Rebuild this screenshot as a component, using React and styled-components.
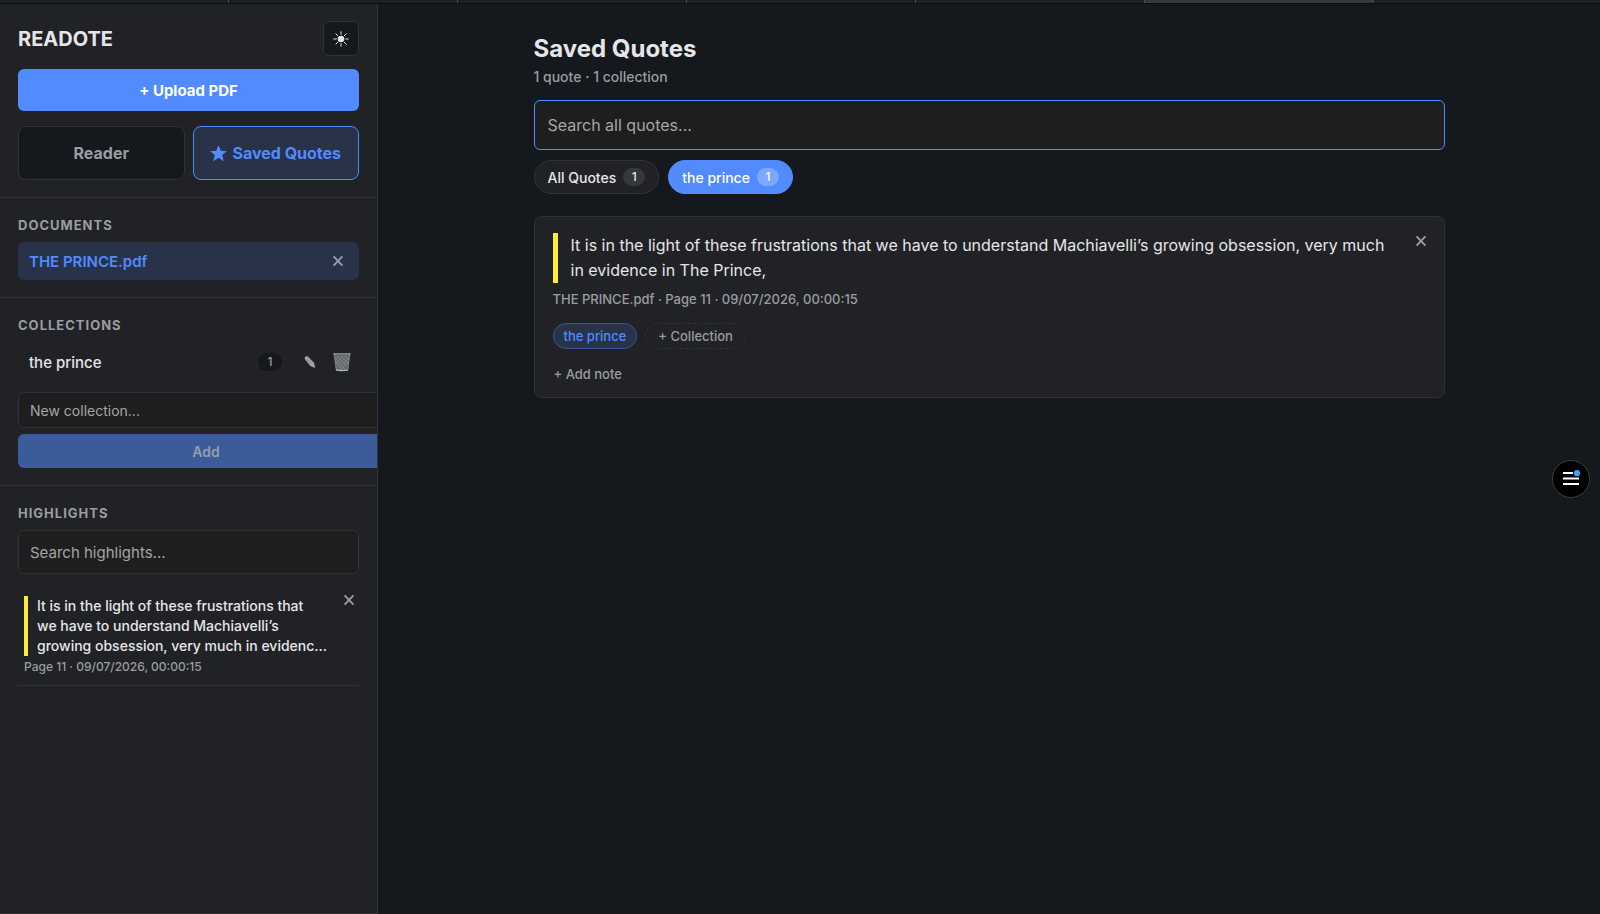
import React, { useState } from "react";
import styled, { createGlobalStyle, css } from "styled-components";

const color = {
  bg: "#15181d",
  panel: "#212226",
  border: "#2f3237",
  text: "#e6e6e9",
  muted: "#9a9da3",
  accent: "#528bff",
  accentSoft: "#283248",
  field: "#1e1e1e",
  mark: "#ffeb3b",
};

const QUOTE =
  "It is in the light of these frustrations that we\u00a0have to understand Machiavelli’s growing obsession, very much in evidence in The Prince,";

const PREVIEW_LENGTH = 121;

const preview = (text) =>
  text.length > PREVIEW_LENGTH ? `${text.slice(0, PREVIEW_LENGTH)}...` : text;

const browserTabs = [1, 2, 3, 4, 5, 6, 7];

const SunIcon = () => (
  <svg width="16" height="16" viewBox="0 0 16 16" aria-hidden="true">
    <circle cx="8" cy="8" r="3.3" fill="currentColor" />
    <path
      d="M8 .7v2.6M8 12.7v2.6M.7 8h2.6M12.7 8h2.6M2.9 2.9l1.8 1.8M11.3 11.3l1.8 1.8M13.1 2.9l-1.8 1.8M4.7 11.3l-1.8 1.8"
      stroke="currentColor"
      strokeWidth="1"
      strokeLinecap="round"
    />
  </svg>
);

const StarIcon = () => (
  <svg width="17" height="17" viewBox="0 0 16 16" aria-hidden="true">
    <path
      d="M8 .2l2.2 5.3 5.6.3-4.3 3.7 1.5 5.7L8 12.1l-5 3.1 1.5-5.7L.2 5.8l5.6-.3z"
      fill="currentColor"
    />
  </svg>
);

const CloseIcon = () => (
  <svg width="12" height="12" viewBox="0 0 12 12" aria-hidden="true">
    <path
      d="M1.6 1.4l8.8 9.2M10.4 1.4l-8.8 9.2"
      stroke="currentColor"
      strokeWidth="1.9"
    />
  </svg>
);

const PencilIcon = () => (
  <svg width="14" height="14" viewBox="0 0 14 14" aria-hidden="true">
    <path
      d="M1.8 4C1 2 3 .5 4.9 1.6l6.1 6.2 1.2 5.2-4.9-1.9z"
      fill="#a3a4a6"
    />
    <path d="M4 4.2l4.4 4.8" stroke="#77787b" strokeWidth=".6" />
  </svg>
);

const TrashIcon = () => (
  <svg width="20" height="20" viewBox="0 0 20 20" aria-hidden="true">
    <path d="M2 2h16l-2 16.2q-6 1.2-12 0z" fill="#5c6265" />
    <path
      d="M3 5l10.5 13M5.5 4l10.5 12M9.5 4l7 8.5M13.5 4l3.5 4.5M3.4 9l7.5 9.5M17 5L6.5 18M14.5 4L4 16M10.5 4l-7 8.5M6.5 4L3 8.5M16.6 9L9 18.5"
      stroke="#969b9e"
      strokeWidth=".6"
    />
    <path d="M2.3 3l2 15M17.7 3l-2 15" stroke="#858a8d" strokeWidth=".8" />
    <path d="M4 17.9q6 1.4 12 0" stroke="#b6babc" strokeWidth="1.2" fill="none" />
    <rect x="1.2" y="1" width="17.6" height="2.2" rx="1.1" fill="#8e9395" />
    <path d="M3 2.2h14" stroke="#4b5053" strokeWidth=".7" />
  </svg>
);

const MenuIcon = () => (
  <svg width="20" height="18" viewBox="0 0 20 18" aria-hidden="true">
    <path d="M2 3h10M2 8.5h16M2 14h16" stroke="#fff" strokeWidth="2.2" />
    <circle cx="16" cy="3.2" r="3.1" fill="#4a9dff" />
  </svg>
);

const App = () => {
  const [view, setView] = useState("quotes");
  const [filter, setFilter] = useState("prince");

  return (
    <Screen>
      <GlobalStyle />
      <TabStrip>
        {browserTabs.map((tab) => (
          <StripTab key={tab} $active={tab === 6} />
        ))}
      </TabStrip>
      <Layout>
        <Sidebar>
          <SidebarTop>
            <Brand>
              <BrandName>READOTE</BrandName>
              <ThemeButton aria-label="Toggle theme">
                <SunIcon />
              </ThemeButton>
            </Brand>
            <UploadButton>+ Upload PDF</UploadButton>
            <ViewTabs>
              <ViewTab $active={view === "reader"} onClick={() => setView("reader")}>
                Reader
              </ViewTab>
              <ViewTab $active={view === "quotes"} onClick={() => setView("quotes")}>
                <StarIcon />
                Saved Quotes
              </ViewTab>
            </ViewTabs>
          </SidebarTop>

          <Section>
            <SectionTitle>Documents</SectionTitle>
            <DocumentRow>
              <DocumentName>THE PRINCE.pdf</DocumentName>
              <IconButton aria-label="Remove document">
                <CloseIcon />
              </IconButton>
            </DocumentRow>
          </Section>

          <Section>
            <SectionTitle>Collections</SectionTitle>
            <CollectionRow>
              <CollectionName>the prince</CollectionName>
              <CollectionCount>1</CollectionCount>
              <CollectionActions>
                <IconButton aria-label="Rename collection">
                  <PencilIcon />
                </IconButton>
                <IconButton aria-label="Delete collection">
                  <TrashIcon />
                </IconButton>
              </CollectionActions>
            </CollectionRow>
            <CollectionForm onSubmit={(e) => e.preventDefault()}>
              <CollectionInput aria-label="New collection" placeholder="New collection..." />
              <AddButton disabled>Add</AddButton>
            </CollectionForm>
          </Section>

          <Section $last>
            <SectionTitle>Highlights</SectionTitle>
            <HighlightSearch
              aria-label="Search highlights"
              placeholder="Search highlights..."
            />
            <Highlight>
              <HighlightBody>
                <HighlightText>{preview(QUOTE)}</HighlightText>
                <HighlightMeta>Page 11 · 09/07/2026, 00:00:15</HighlightMeta>
              </HighlightBody>
              <IconButton aria-label="Delete highlight">
                <CloseIcon />
              </IconButton>
            </Highlight>
          </Section>
        </Sidebar>

        <Main>
          <Content>
            <PageTitle>Saved Quotes</PageTitle>
            <Summary>1 quote · 1 collection</Summary>
            <QuoteSearch aria-label="Search all quotes" placeholder="Search all quotes..." />
            <Filters>
              <Filter $active={filter === "all"} onClick={() => setFilter("all")}>
                All Quotes <FilterCount $active={filter === "all"}>1</FilterCount>
              </Filter>
              <Filter $active={filter === "prince"} onClick={() => setFilter("prince")}>
                the prince <FilterCount $active={filter === "prince"}>1</FilterCount>
              </Filter>
            </Filters>

            <Card>
              <CardBody>
                <Quote>{QUOTE}</Quote>
                <CardMeta>THE PRINCE.pdf · Page 11 · 09/07/2026, 00:00:15</CardMeta>
                <Tags>
                  <Tag>the prince</Tag>
                  <AddTag>+ Collection</AddTag>
                </Tags>
                <NoteButton>+ Add note</NoteButton>
              </CardBody>
              <IconButton aria-label="Delete quote">
                <CloseIcon />
              </IconButton>
            </Card>
          </Content>
        </Main>
      </Layout>
      <FloatingButton aria-label="Open menu">
        <MenuIcon />
      </FloatingButton>
    </Screen>
  );
};

export default App;

// Styled-components
const GlobalStyle = createGlobalStyle`
  * {
    box-sizing: border-box;
  }

  body {
    margin: 0;
    background: ${color.bg};
    color: ${color.text};
    font-family: Inter, "Liberation Sans", sans-serif;
  }

  button,
  input {
    font-family: inherit;
    margin: 0;
  }

  button {
    cursor: pointer;
  }

  h1, h2, p, blockquote {
    margin: 0;
  }
`;

const Screen = styled.div`
  display: flex;
  flex-direction: column;
  min-height: 100vh;
`;

const TabStrip = styled.div`
  display: grid;
  grid-template-columns: repeat(6, 229px) 1fr;
  height: 4px;
  background: #1d2023;
  border-bottom: 1px solid #0c0d0f;
`;

const StripTab = styled.div`
  border-right: 1px solid #4a4c4f;
  background: ${(props) => (props.$active ? "#37383b" : "transparent")};

  &:last-child {
    border-right: 0;
  }
`;

const Layout = styled.div`
  display: flex;
  flex: 1;
`;

const Sidebar = styled.aside`
  flex: 0 0 378px;
  overflow: hidden;
  background: ${color.panel};
  border-right: 1px solid ${color.border};
  border-bottom: 1px solid ${color.border};
`;

const SidebarTop = styled.div`
  padding: 17px 18px;
  border-bottom: 1px solid ${color.border};
`;

const Brand = styled.div`
  display: flex;
  align-items: center;
  justify-content: space-between;
  margin-bottom: 13px;
`;

const BrandName = styled.h1`
  font-size: 20px;
  font-weight: 700;
  line-height: 24px;
`;

const ThemeButton = styled.button`
  display: flex;
  align-items: center;
  justify-content: center;
  width: 36px;
  height: 35px;
  padding: 0;
  color: ${color.text};
  background: ${color.bg};
  border: 1px solid ${color.border};
  border-radius: 6px;
`;

const UploadButton = styled.button`
  display: block;
  width: 100%;
  height: 42px;
  margin-bottom: 15px;
  color: #fff;
  font-size: 15px;
  font-weight: 700;
  background: ${color.accent};
  border: 0;
  border-radius: 6px;
`;

const ViewTabs = styled.div`
  display: grid;
  grid-template-columns: 1fr 1fr;
  gap: 8px;
`;

const ViewTab = styled.button`
  display: flex;
  align-items: center;
  justify-content: center;
  gap: 5px;
  height: 54px;
  padding: 0;
  white-space: nowrap;
  color: ${(props) => (props.$active ? color.accent : color.muted)};
  font-size: 16px;
  font-weight: 700;
  background: ${(props) => (props.$active ? color.accentSoft : color.bg)};
  border: 1px solid ${(props) => (props.$active ? color.accent : color.border)};
  border-radius: 8px;
`;

const Section = styled.section`
  padding: 18px 18px 17px;
  border-bottom: ${(props) => (props.$last ? "0" : `1px solid ${color.border}`)};
`;

const SectionTitle = styled.h2`
  margin-bottom: 8px;
  color: ${color.muted};
  font-size: 13px;
  font-weight: 700;
  line-height: 18px;
  letter-spacing: 1px;
  text-transform: uppercase;
`;

const IconButton = styled.button`
  display: flex;
  align-items: center;
  justify-content: center;
  width: 20px;
  height: 20px;
  flex-shrink: 0;
  padding: 0;
  color: ${color.muted};
  background: none;
  border: 0;
`;

const DocumentRow = styled.div`
  display: flex;
  align-items: center;
  justify-content: space-between;
  height: 38px;
  padding: 0 11px;
  background: ${color.accentSoft};
  border-radius: 6px;
`;

const DocumentName = styled.span`
  color: ${color.accent};
  font-size: 15px;
  font-weight: 600;
`;

const CollectionRow = styled.div`
  display: flex;
  align-items: center;
  height: 40px;
  margin-bottom: 10px;
  padding: 0 7px 0 11px;
`;

const CollectionName = styled.span`
  flex: 1;
  font-size: 15px;
  font-weight: 500;
`;

const CollectionCount = styled.span`
  width: 24px;
  color: ${color.muted};
  font-size: 12px;
  font-weight: 500;
  line-height: 18px;
  text-align: center;
  background: ${color.bg};
  border-radius: 9px;
`;

const CollectionActions = styled.div`
  display: flex;
  gap: 12px;
  margin-left: 18px;
`;

/* wider than the sidebar, the right end is cut off by its edge */
const CollectionForm = styled.form`
  display: flex;
  flex-direction: column;
  gap: 6px;
  width: 376px;
`;

const field = css`
  width: 100%;
  padding: 0 11px;
  color: ${color.text};
  background: ${color.field};
  border: 1px solid ${color.border};
  border-radius: 6px;
  outline: none;

  &::placeholder {
    color: #a5a5a5;
    opacity: 1;
  }
`;

const CollectionInput = styled.input`
  ${field}
  height: 36px;
  font-size: 14px;
`;

const AddButton = styled.button`
  height: 34px;
  color: #9a9da3;
  font-size: 14px;
  font-weight: 600;
  background: #3b5b9b;
  border: 0;
  border-radius: 6px;
`;

const HighlightSearch = styled.input`
  ${field}
  height: 44px;
  font-size: 15px;
`;

const Highlight = styled.article`
  display: flex;
  margin-top: 12px;
  padding: 4px 0 9px 6px;
  border-bottom: 1px solid ${color.border};
`;

const HighlightBody = styled.div`
  flex: 1;
  padding-top: 6px;
`;

const HighlightText = styled.p`
  padding: 0 9px;
  font-size: 14px;
  font-weight: 500;
  line-height: 20px;
  border-left: 4px solid ${color.mark};
`;

const HighlightMeta = styled.p`
  margin-top: 2px;
  color: ${color.muted};
  font-size: 12px;
  font-weight: 500;
  line-height: 18px;
`;

const Main = styled.main`
  flex: 1;
  padding: 30px 24px;
`;

const Content = styled.div`
  max-width: 911px;
  margin: 0 auto;
`;

const PageTitle = styled.h2`
  font-size: 24px;
  font-weight: 700;
  line-height: 30px;
`;

const Summary = styled.p`
  margin: 3px 0 13px;
  color: ${color.muted};
  font-size: 14px;
  font-weight: 500;
  line-height: 20px;
`;

const QuoteSearch = styled.input`
  ${field}
  height: 50px;
  padding: 0 13px;
  font-size: 16px;
  border-color: ${color.accent};
`;

const Filters = styled.div`
  display: flex;
  gap: 9px;
  margin: 10px 0 22px;
`;

const Filter = styled.button`
  display: flex;
  align-items: center;
  gap: 7px;
  height: 34px;
  padding: 0 13px;
  color: ${(props) => (props.$active ? "#fff" : color.text)};
  font-size: 14px;
  font-weight: 500;
  background: ${(props) => (props.$active ? color.accent : color.panel)};
  border: 1px solid ${(props) => (props.$active ? color.accent : color.border)};
  border-radius: 17px;
`;

const FilterCount = styled.span`
  width: 22px;
  font-size: 12px;
  line-height: 18px;
  text-align: center;
  background: ${(props) => (props.$active ? "#7da8ff" : "#35383b")};
  border-radius: 9px;
`;

const Card = styled.article`
  display: flex;
  align-items: flex-start;
  padding: 14px 13px 13px 18px;
  background: ${color.panel};
  border: 1px solid ${color.border};
  border-radius: 8px;
`;

const CardBody = styled.div`
  flex: 1;
  padding: 2px 20px 0 0;
`;

const Quote = styled.blockquote`
  padding-left: 13px;
  font-size: 16px;
  line-height: 25px;
  border-left: 5px solid ${color.mark};
`;

const CardMeta = styled.p`
  margin: 7px 0 15px;
  color: ${color.muted};
  font-size: 13px;
  font-weight: 500;
  line-height: 18px;
`;

const Tags = styled.div`
  display: flex;
  gap: 8px;
  margin-bottom: 15px;
`;

const Tag = styled.button`
  height: 26px;
  padding: 0 10px;
  color: ${color.accent};
  font-size: 13px;
  font-weight: 500;
  background: ${color.accentSoft};
  border: 1px solid #355696;
  border-radius: 13px;
`;

const AddTag = styled(Tag)`
  padding: 0 12px;
  color: ${color.muted};
  background: transparent;
  border: 1px dashed ${color.border};
`;

const NoteButton = styled.button`
  display: block;
  padding: 0 1px;
  color: ${color.muted};
  font-size: 13px;
  font-weight: 500;
  line-height: 20px;
  background: none;
  border: 0;
`;

const FloatingButton = styled.button`
  position: fixed;
  top: 460px;
  right: 10px;
  display: flex;
  align-items: center;
  justify-content: center;
  width: 38px;
  height: 38px;
  padding: 0;
  background: #000;
  border: 1px solid #3c3e41;
  border-radius: 50%;
`;
